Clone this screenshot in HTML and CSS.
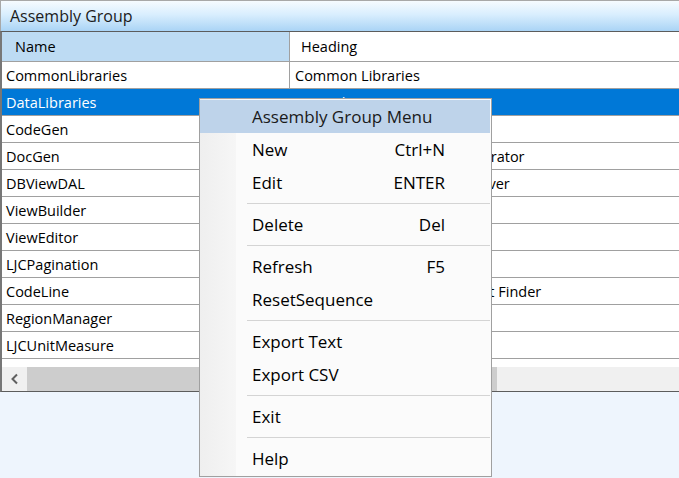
FILE: index.html
```html
<!DOCTYPE html>
<html>
<head>
<meta charset="utf-8">
<title>Assembly Group</title>
<link rel="stylesheet" href="styles.css">
</head>
<body>
<div class="window">
  <div class="titlebar">Assembly Group</div>
  <div class="grid">
    <div class="row head">
      <div class="cell name sorted">Name</div>
      <div class="cell heading">Heading</div>
    </div>
    <div class="row"><div class="cell name">CommonLibraries</div><div class="cell heading">Common Libraries</div></div>
    <div class="row selected"><div class="cell name">DataLibraries</div><div class="cell heading">Data Libraries</div></div>
    <div class="row"><div class="cell name">CodeGen</div><div class="cell heading">Code Generator</div></div>
    <div class="row"><div class="cell name">DocGen</div><div class="cell heading">Project Documentation Generator</div></div>
    <div class="row"><div class="cell name">DBViewDAL</div><div class="cell heading">Database Views Accessor Driver</div></div>
    <div class="row"><div class="cell name">ViewBuilder</div><div class="cell heading">View Builder</div></div>
    <div class="row"><div class="cell name">ViewEditor</div><div class="cell heading">View Editor</div></div>
    <div class="row"><div class="cell name">LJCPagination</div><div class="cell heading">Pagination</div></div>
    <div class="row"><div class="cell name">CodeLine</div><div class="cell heading">Source Line Counter and Text Finder</div></div>
    <div class="row"><div class="cell name">RegionManager</div><div class="cell heading">Region Manager</div></div>
    <div class="row"><div class="cell name">LJCUnitMeasure</div><div class="cell heading">Unit Measure</div></div>
    <div class="filler"></div>
    <div class="hscroll">
      <div class="arrow">
        <svg width="10" height="12" viewBox="0 0 10 12"><polyline points="7,1.5 2.5,6 7,10.5" fill="none" stroke="#606060" stroke-width="2"/></svg>
      </div>
      <div class="thumb"></div>
      <div class="track"></div>
    </div>
  </div>
</div>

<div class="menu">
  <div class="menu-item menu-title">Assembly Group Menu</div>
  <div class="menu-item"><span>New</span><span>Ctrl+N</span></div>
  <div class="menu-item"><span>Edit</span><span>ENTER</span></div>
  <div class="menu-sep"></div>
  <div class="menu-item"><span>Delete</span><span>Del</span></div>
  <div class="menu-sep"></div>
  <div class="menu-item"><span>Refresh</span><span>F5</span></div>
  <div class="menu-item"><span>ResetSequence</span></div>
  <div class="menu-sep"></div>
  <div class="menu-item"><span>Export Text</span></div>
  <div class="menu-item"><span>Export CSV</span></div>
  <div class="menu-sep"></div>
  <div class="menu-item"><span>Exit</span></div>
  <div class="menu-sep"></div>
  <div class="menu-item"><span>Help</span></div>
</div>
</body>
</html>
```

FILE: styles.css
```css
* {
  box-sizing: border-box;
}

html, body {
  margin: 0;
  padding: 0;
}

body {
  width: 679px;
  height: 478px;
  overflow: hidden;
  position: relative;
  background: #eef5fd;
  font-family: "Open Sans", "Liberation Sans", sans-serif;
  color: #000;
}

.window {
  height: 392px;
  display: flex;
  flex-direction: column;
}

.titlebar {
  height: 31px;
  flex: none;
  border-top: 1px solid #a8a8a8;
  border-left: 1px solid #a8a8a8;
  padding-left: 9px;
  display: flex;
  align-items: center;
  font-size: 16px;
  color: #1b1b1b;
  background: linear-gradient(#f6fbff 0%, #d9eefe 45%, #aad4f5 100%);
}

.grid {
  flex: 1;
  display: flex;
  flex-direction: column;
  background: #fff;
  border-top: 1px solid #5c5c5c;
  border-left: 2px solid #777;
  border-bottom: 1px solid #5c5c5c;
}

.row {
  display: grid;
  grid-template-columns: 288px 1fr;
  height: 27px;
  flex: none;
  border-bottom: 1px solid #a0a0a0;
  font-size: 14.5px;
}

.cell {
  display: flex;
  align-items: center;
  white-space: nowrap;
  overflow: hidden;
}

.cell.name {
  padding-left: 4px;
  border-right: 1px solid #a0a0a0;
}

.cell.heading {
  padding-left: 5px;
}

.row.head {
  height: 30px;
}

.row.head .name {
  padding-left: 13px;
}

.row.head .heading {
  padding-left: 11px;
}

.row.head .sorted {
  background: #bddbf3;
}

.row.selected {
  background: #0078d7;
  color: #fff;
}

.row.selected .name {
  border-right-color: #0078d7;
}

.filler {
  flex: 1;
}

.hscroll {
  height: 24px;
  flex: none;
  display: flex;
  background: #f0f0f0;
}

.arrow {
  width: 25px;
  display: flex;
  align-items: center;
  justify-content: center;
}

.thumb {
  width: 470px;
  background: #cdcdcd;
}

.track {
  flex: 1;
}

.menu {
  position: absolute;
  left: 199px;
  top: 98px;
  width: 293px;
  border: 1px solid #a0a0a0;
  padding: 1px 1px 1px 0;
  background: linear-gradient(90deg, #efefef 0, #f6f6f6 36px, #fbfbfb 36px);
  font-size: 17px;
}

.menu-item {
  height: 33px;
  display: flex;
  align-items: center;
  justify-content: space-between;
  padding: 0 45px 0 52px;
  white-space: nowrap;
}

.menu-title {
  background: #bed3ea;
  color: #1a1a1a;
}

.menu-sep {
  height: 1px;
  margin: 4px 0 4px 47px;
  background: #d4d4d4;
}
```
